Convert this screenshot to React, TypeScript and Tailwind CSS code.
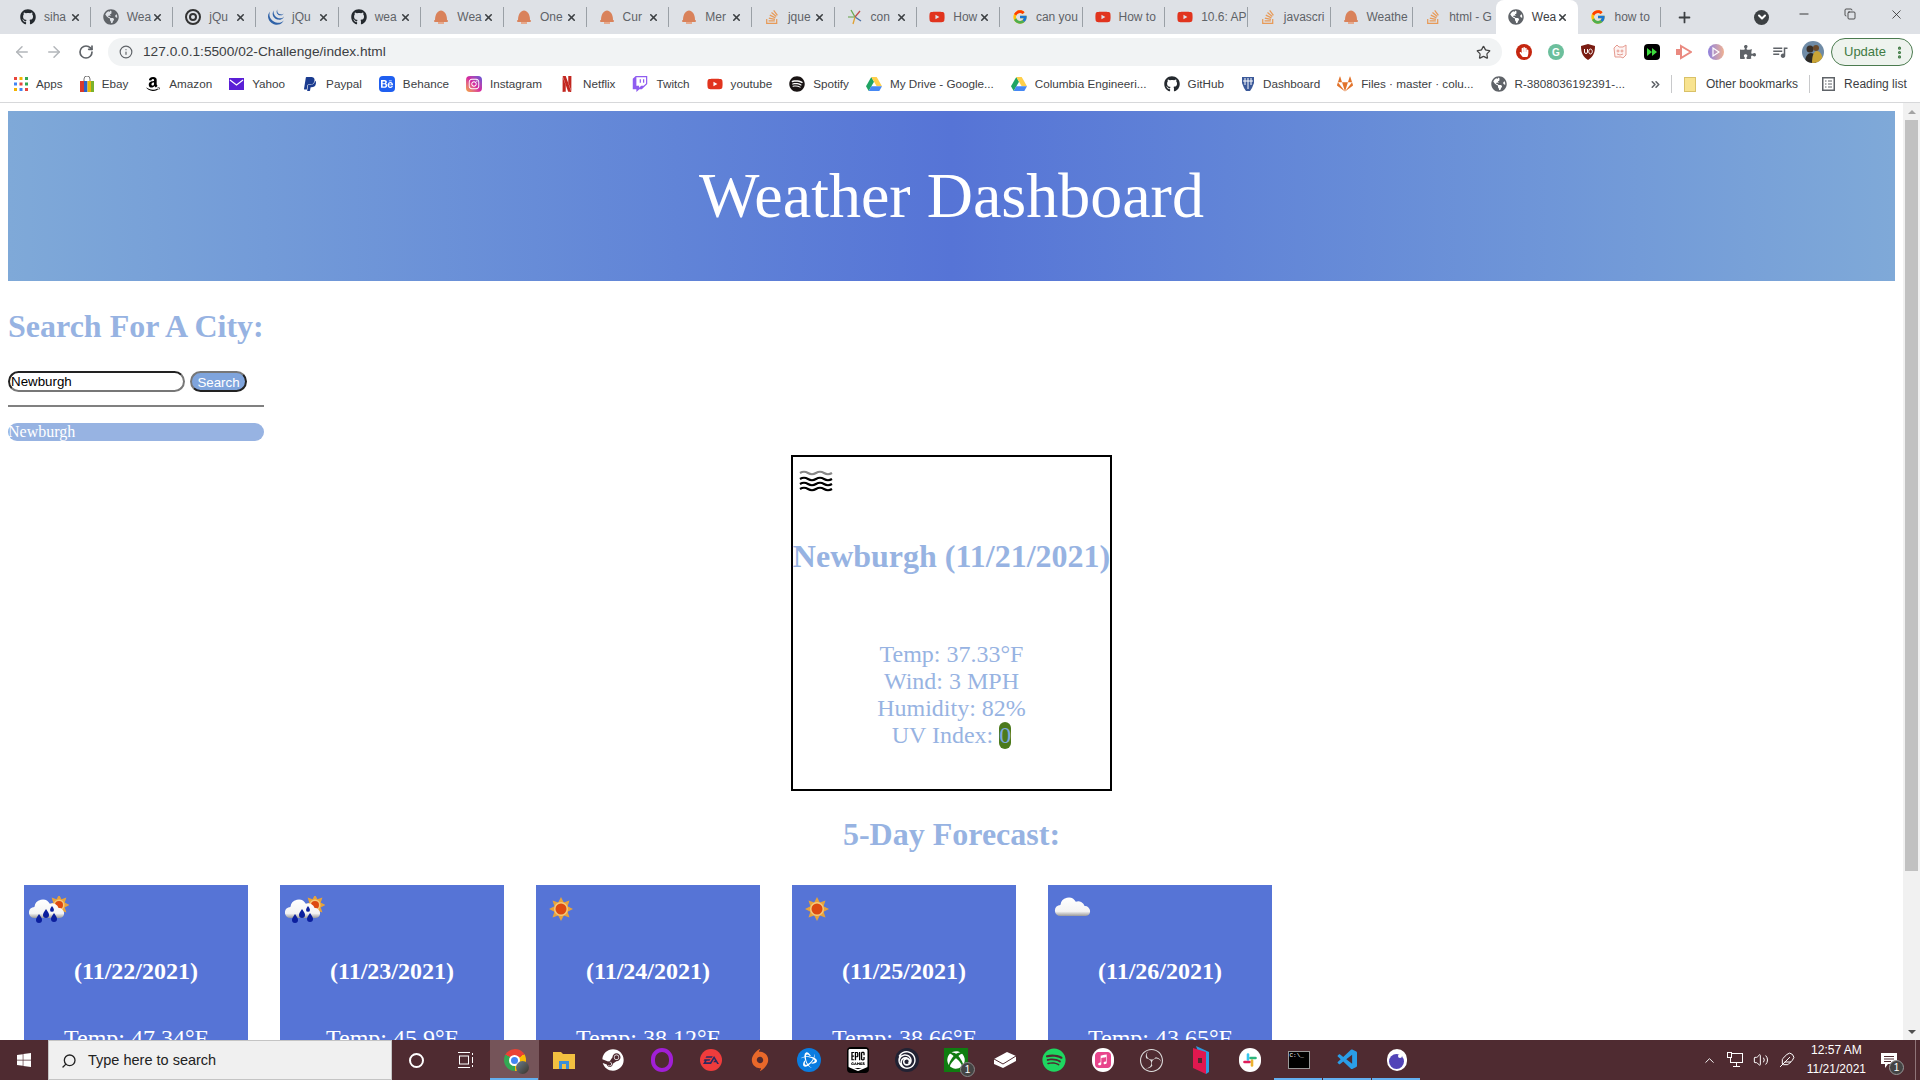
import React from 'react';
import { ArrowLeft, ArrowRight, RotateCw, Info, Star, X, Plus, Minus, Copy, ChevronDown, MoreVertical, ChevronsRight, Search, ChevronUp, Volume2, Feather } from 'lucide-react';
import { FaGithub, FaAmazon, FaPaypal, FaInstagram, FaSpotify, FaYoutube, FaTwitch, FaWindows, FaSteam, FaGitlab, FaStackOverflow, FaXbox, FaGlobeAmericas, FaHandPaper, FaPuzzlePiece } from 'react-icons/fa';
import { FcGoogle } from 'react-icons/fc';
import { MdQueueMusic } from 'react-icons/md';
import { SiJquery, SiBehance, SiNetflix, SiEpicgames, SiUbisoft, SiOrigin, SiObsstudio, SiApplemusic, SiEa, SiBattledotnet } from 'react-icons/si';
import { VscVscode } from 'react-icons/vsc';

const SERIF = 'font-["Liberation_Serif",serif]';

const Mushroom = () => (
  <svg viewBox="0 0 16 16" className="w-4 h-4 shrink-0">
    <path d="M2 11C2 5 5 1.500 8 1.500s6 3.500 6 9.500z" fill="#d9825b" />
    <rect x="1" y="11" width="14" height="2" rx="1" fill="#d9825b" />
    <rect x="5" y="13" width="6" height="2" fill="#e6a98c" />
  </svg>
);

const Youtube = () => <FaYoutube className="w-4 h-4 shrink-0 text-[#e1341e]" />;
const Stack = () => <FaStackOverflow className="w-4 h-4 shrink-0 text-[#e79a58]" />;
const GH = () => <FaGithub className="w-4 h-4 shrink-0 text-[#24292e]" />;
const World = () => <FaGlobeAmericas className="w-4 h-4 shrink-0 text-[#5f6368]" />;

const Conv = () => (
  <svg viewBox="0 0 16 16" className="w-4 h-4 shrink-0" fill="none" strokeWidth="1.3">
    <path d="M8 8 4 1" stroke="#6aa84f" />
    <path d="M8 8l5-6" stroke="#c0504d" />
    <path d="M8 8H1" stroke="#7fb069" />
    <path d="M8 8l6 4" stroke="#4a6fa5" />
    <path d="M8 8l-2 7" stroke="#e0a030" />
  </svg>
);

const Drive = () => (
  <svg viewBox="0 0 16 14" className="w-4 h-[14px]">
    <polygon points="5.3,0 0,9.3 2.7,14 8,4.7" fill="#1fa463" />
    <polygon points="5.3,0 10.7,0 16,9.3 10.7,9.3" fill="#ffd04b" />
    <polygon points="2.7,14 13.300,14 16,9.3 5.3,9.3" fill="#4688f4" />
  </svg>
);

const AppsGrid = () => (
  <svg viewBox="0 0 14 14" className="w-[14px] h-[14px]">
    {['#e8453c', '#f3b300', '#34a853', '#4285f4', '#e8453c', '#34a853', '#f3b300', '#4285f4', '#e8453c'].map((c, i) => (
      <rect key={i} x={(i % 3) * 5.5} y={Math.floor(i / 3) * 5.5} width="3" height="3" fill={c} />
    ))}
  </svg>
);

const EbayBag = () => (
  <svg viewBox="0 0 14 16" className="w-[14px] h-4">
    <path d="M4 5V3a3 3 0 0 1 6 0v2" fill="none" stroke="#777" strokeWidth="1" />
    <rect x="0" y="5" width="4" height="11" fill="#d8382c" />
    <rect x="4" y="5" width="3.5" height="11" fill="#2a62c9" />
    <rect x="7.5" y="5" width="3.5" height="11" fill="#e5b80b" />
    <rect x="11" y="5" width="3" height="11" fill="#7ab32c" />
  </svg>
);

const YahooMail = () => (
  <svg viewBox="0 0 15 12" className="w-[15px] h-3">
    <rect width="15" height="12" fill="#5a1fd6" />
    <path d="M1 2l6.500 5L14 2" fill="none" stroke="#fff" strokeWidth="1.2" />
  </svg>
);

const DashboardMark = () => (
  <svg viewBox="0 0 14 16" className="w-[14px] h-4">
    <path d="M1 1h12v6l-2 5-2 3H5l-2-3-2-5z" fill="#3c5a9a" />
    <path d="M4 2v7M7 2v11M10 2v7M2 5h10" stroke="#fff" strokeWidth="1" />
  </svg>
);

const TABS = [
  { icon: <GH />, label: 'siha', close: true },
  { icon: <World />, label: 'Wea', close: true },
  { icon: <div className="w-4 h-4 shrink-0 rounded-full border-2 border-[#333] flex items-center justify-center"><div className="w-2 h-2 rounded-full border-2 border-[#333]" /></div>, label: 'jQu', close: true },
  { icon: <SiJquery className="w-4 h-4 shrink-0 text-[#2f62a8]" />, label: 'jQu', close: true },
  { icon: <GH />, label: 'wea', close: true },
  { icon: <Mushroom />, label: 'Wea', close: true },
  { icon: <Mushroom />, label: 'One', close: true },
  { icon: <Mushroom />, label: 'Cur', close: true },
  { icon: <Mushroom />, label: 'Mer', close: true },
  { icon: <Stack />, label: 'jque', close: true },
  { icon: <Conv />, label: 'con', close: true },
  { icon: <Youtube />, label: 'How', close: true },
  { icon: <FcGoogle className="w-4 h-4 shrink-0" />, label: 'can you' },
  { icon: <Youtube />, label: 'How to' },
  { icon: <Youtube />, label: '10.6: AP' },
  { icon: <Stack />, label: 'javascri' },
  { icon: <Mushroom />, label: 'Weathe' },
  { icon: <Stack />, label: 'html - G' },
  { icon: <World />, label: 'Wea', active: true, close: true },
  { icon: <FcGoogle className="w-4 h-4 shrink-0" />, label: 'how to' },
];

const BOOKMARKS = [
  { icon: <AppsGrid />, label: 'Apps' },
  { icon: <EbayBag />, label: 'Ebay' },
  { icon: <FaAmazon className="w-4 h-4 text-black" />, label: 'Amazon' },
  { icon: <YahooMail />, label: 'Yahoo' },
  { icon: <FaPaypal className="w-4 h-4 text-[#1a3b8f]" />, label: 'Paypal' },
  { icon: <div className="w-4 h-4 rounded-sm bg-[#1f5ff0] flex items-center justify-center"><SiBehance className="w-3 h-3 text-white" /></div>, label: 'Behance' },
  { icon: <div className="w-4 h-4 rounded-sm bg-gradient-to-tr from-[#f5a623] via-[#d6249f] to-[#5b51d8] flex items-center justify-center"><FaInstagram className="w-3 h-3 text-white" /></div>, label: 'Instagram' },
  { icon: <SiNetflix className="w-4 h-4 text-[#c2261f]" />, label: 'Netflix' },
  { icon: <FaTwitch className="w-4 h-4 text-[#8f5cf0]" />, label: 'Twitch' },
  { icon: <Youtube />, label: 'youtube' },
  { icon: <FaSpotify className="w-4 h-4 text-[#191414]" />, label: 'Spotify' },
  { icon: <Drive />, label: 'My Drive - Google...' },
  { icon: <Drive />, label: 'Columbia Engineeri...' },
  { icon: <GH />, label: 'GitHub' },
  { icon: <DashboardMark />, label: 'Dashboard' },
  { icon: <FaGitlab className="w-4 h-4 text-[#e2732b]" />, label: 'Files · master · colu...' },
  { icon: <World />, label: 'R-3808036192391-...' },
];

const FORECAST = [
  { date: '(11/22/2021)', temp: 'Temp: 47.34°F', icon: 'rain' },
  { date: '(11/23/2021)', temp: 'Temp: 45.9°F', icon: 'rain' },
  { date: '(11/24/2021)', temp: 'Temp: 38.12°F', icon: 'sun' },
  { date: '(11/25/2021)', temp: 'Temp: 38.66°F', icon: 'sun' },
  { date: '(11/26/2021)', temp: 'Temp: 43.65°F', icon: 'cloud' },
];

const Sun = ({ cx, cy, r }: { cx: number; cy: number; r: number }) => (
  <g>
    {[0, 45, 90, 135, 180, 225, 270, 315].map((a) => (
      <polygon key={a} points={`${cx - 3},${cy - r + 1} ${cx + 3},${cy - r + 1} ${cx},${cy - r - 5}`} fill="#e8a33a" transform={`rotate(${a} ${cx} ${cy})`} />
    ))}
    <circle cx={cx} cy={cy} r={r} fill="#f5c97a" />
    <circle cx={cx} cy={cy} r={r - 1.5} fill="#dd4a10" />
  </g>
);

const Cloud = ({ x = 0, y = 0 }: { x?: number; y?: number }) => (
  <g transform={`translate(${x} ${y}) scale(1.1)`}>
    <path d="M4 20a5 5 0 0 1 0-10 7.500 7.500 0 0 1 14-3 6 6 0 0 1 8 4 4.600 4.600 0 0 1 5 4.500 4.500 4.500 0 0 1-4 4.500z" fill="url(#cloudfill)" />
  </g>
);

const Drop = ({ x, y, s = 1 }: { x: number; y: number; s?: number }) => (
  <path transform={`translate(${x} ${y}) scale(${s})`} d="M0 0c-2 3-3 4.500-3 6a3 3 0 0 0 6 0c0-1.500-1-3-3-6z" fill="#0b1f9e" />
);

const WeatherIcon = ({ type }: { type: string }) => (
  <svg viewBox="0 0 40 30" className="w-10 h-[30px]">
    <defs>
      <linearGradient id="cloudfill" x1="0" y1="0" x2="0" y2="1">
        <stop offset="0" stopColor="#ffffff" />
        <stop offset="0.75" stopColor="#f4f4f4" />
        <stop offset="1" stopColor="#9a9a9a" />
      </linearGradient>
    </defs>
    {type === 'rain' && (
      <>
        <Sun cx={30} cy={9} r={5.5} />
        <Cloud x={1} y={0} />
        <Drop x={23} y={10} s={0.65} />
        <Drop x={17} y={13} />
        <Drop x={25} y={17} />
        <Drop x={10} y={18} />
      </>
    )}
    {type === 'sun' && <Sun cx={20} cy={13} r={7} />}
    {type === 'cloud' && <Cloud x={3} y={-2} />}
  </svg>
);

const Wind = () => (
  <svg viewBox="0 0 36 22" className="w-9 h-[22px]" fill="none" stroke="#000" strokeWidth="2.2">
    <path d="M1 3q4-2.500 8 0t8 0 8 0 8 0" stroke="#888" />
    <path d="M1 9q4-2.500 8 0t8 0 8 0 8 0" />
    <path d="M1 14q4-2.500 8 0t8 0 8 0 8 0" />
    <path d="M1 19q4-2.500 8 0t8 0 8 0 8 0" />
  </svg>
);

const TaskIcon = ({ children, open, active }: { children: React.ReactNode; open?: boolean; active?: boolean }) => (
  <div className={`relative w-[49px] h-full flex items-center justify-center ${active ? 'bg-[#755459]' : ''}`}>
    {children}
    {open && <div className="absolute bottom-0 left-0 right-[1px] h-[2px] bg-[#63b0f0]" />}
  </div>
);

const TabStrip = () => (
  <div className="h-[34px] bg-[#dee1e6] flex items-end pl-2 shrink-0">
    {TABS.map((tab, i) => (
      <div
        key={i}
        className={`w-[82.67px] h-[34px] flex items-center pl-[12px] relative ${tab.close ? 'pr-[10px]' : 'pr-[2px]'} ${tab.active ? 'bg-white rounded-t-lg' : ''}`}
      >
        {tab.icon}
        <span className={`ml-[8px] flex-1 whitespace-nowrap text-[12px] font-['Liberation_Sans',sans-serif] ${tab.active ? 'text-[#3c4043]' : 'text-[#5f6368]'}`}>{tab.label}</span>
        {tab.close && <X className="w-[11px] h-[11px] shrink-0 text-[#3c4043]" strokeWidth={3.5} />}
        {!tab.active && i !== 17 && <div className="absolute right-0 top-[7px] h-[20px] w-px bg-[#9aa0a6]" />}
      </div>
    ))}
    <div className="w-[45px] h-[34px] flex items-center justify-center ml-[1px]">
      <Plus className="w-[17px] h-[17px] text-[#3c4043]" strokeWidth={2.5} />
    </div>
    <div className="w-[33px] h-[34px] flex items-center justify-center ml-[38px]">
      <div className="w-[15px] h-[15px] rounded-full bg-[#3c4043] flex items-center justify-center">
        <ChevronDown className="w-3 h-3 text-white" strokeWidth={4} />
      </div>
    </div>
    <div className="flex-1" />
    <div className="h-[34px] flex items-start pt-[7px] pr-[1px]">
      <div className="w-[46px] flex justify-center"><Minus className="w-[14px] h-[14px] text-[#222]" strokeWidth={1.5} /></div>
      <div className="w-[46px] flex justify-center"><Copy className="w-[12px] h-[14px] text-[#222]" strokeWidth={1.5} /></div>
      <div className="w-[46px] flex justify-center"><X className="w-[15px] h-[15px] text-[#222]" strokeWidth={1.2} /></div>
    </div>
  </div>
);

const Toolbar = () => (
  <div className="h-[36px] bg-white flex items-center shrink-0 pl-[13px]">
    <ArrowLeft className="w-[18px] h-[18px] text-[#b3b6ba]" strokeWidth={2} />
    <ArrowRight className="w-[18px] h-[18px] text-[#b3b6ba] ml-[14px]" strokeWidth={2} />
    <RotateCw className="w-4 h-4 text-[#5f6368] ml-[15px]" strokeWidth={2.5} />
    <div className="ml-[14px] w-[1394px] h-[28px] bg-[#f1f3f4] rounded-full flex items-center pl-[11px] pr-[11px]">
      <Info className="w-[14px] h-[14px] text-[#5f6368]" strokeWidth={2} />
      <span className="ml-[10px] text-[13.7px] text-[#3c4043] font-['Liberation_Sans',sans-serif]">127.0.0.1:5500/02-Challenge/index.html</span>
      <div className="flex-1" />
      <Star className="w-[15px] h-[15px] text-[#444]" strokeWidth={2} />
    </div>
    <div className="flex items-center ml-[14px] gap-[16px]">
      <div className="w-4 h-4 rounded-full bg-[#c5260f] flex items-center justify-center"><FaHandPaper className="w-[10px] h-[10px] text-white" /></div>
      <div className="w-4 h-4 rounded-full bg-[#6cbf9c] flex items-center justify-center text-white text-[10px] font-bold font-['Liberation_Sans',sans-serif]">G</div>
      <svg viewBox="0 0 16 16" className="w-4 h-4">
        <path d="M8 0l7 2c0 7-2 11-7 14C3 13 1 9 1 2z" fill="#7a1c12" />
        <path d="M4.500 5v3a1.500 1.500 0 0 0 3 0V5M10.500 5a1.800 2.500 0 1 0 .01 0z" fill="none" stroke="#fff" strokeWidth="1" />
      </svg>
      <svg viewBox="0 0 16 16" className="w-4 h-4" fill="none" stroke="#e59a8f" strokeWidth="1">
        <path d="M2 4l3-3 2 2h4l3-2v10l-3 3-2-1H3z" fill="#fdf3f2" />
        <circle cx="6" cy="7" r="1" />
        <circle cx="10" cy="7" r="1" />
        <path d="M5 10q3 2 6 0" />
      </svg>
      <div className="w-4 h-4 rounded-sm bg-black flex items-center justify-center">
        <svg viewBox="0 0 10 8" className="w-[10px] h-2" fill="#3ddc3d">
          <path d="M0 0l5 4-5 4zM5 0l5 4-5 4z" />
        </svg>
      </div>
      <svg viewBox="0 0 16 16" className="w-4 h-4">
        <rect x="0" y="5" width="5" height="6" fill="#ea8a80" />
        <path d="M5 2l10 6-10 6z" fill="none" stroke="#ea8a80" strokeWidth="2" />
      </svg>
      <div className="w-4 h-4 rounded-full bg-gradient-to-r from-[#8f7fdc] to-[#f0b090] flex items-center justify-center">
        <svg viewBox="0 0 8 10" className="w-2 h-[10px]"><path d="M1 1l6 4-6 4z" fill="none" stroke="#fff" strokeWidth="1.2" /></svg>
      </div>
      <FaPuzzlePiece className="w-4 h-4 text-[#5f6368]" />
      <MdQueueMusic className="w-[18px] h-[18px] -mx-[1px] text-[#5f6368]" />
      <svg viewBox="0 0 22 22" className="-ml-[2px] w-[22px] h-[22px] rounded-full">
        <rect width="22" height="22" fill="#6f8ba6" />
        <circle cx="8" cy="8" r="3.500" fill="#3a3028" />
        <path d="M3 22c0-7 3-10 6-10s5 3 5 10z" fill="#2c2a26" />
        <circle cx="14" cy="7" r="3" fill="#6b4a2a" />
        <path d="M10 22c0-8 2-12 5-12s6 4 6 12z" fill="#c9a436" />
      </svg>
    </div>
    <div className="ml-[7px] w-[82px] h-[28px] rounded-full border border-[#4b7b4f] bg-[#eef3ee] flex items-center pl-[12px]">
      <span className="text-[13px] text-[#3f7a43] font-['Liberation_Sans',sans-serif]">Update</span>
      <MoreVertical className="w-[15px] h-[15px] text-[#3f7a43] ml-[6px]" strokeWidth={3} />
    </div>
  </div>
);

const BookmarksBar = () => (
  <div className="h-[33px] pb-[4px] bg-white border-b border-[#d7d8da] flex items-center shrink-0 pl-[14px] font-['Liberation_Sans',sans-serif] text-[12px] text-[#3c4043]">
    <div className="flex items-center gap-[17px] w-[1627px] text-[11.7px]">
      {BOOKMARKS.map((b) => (
        <div key={b.label} className="flex items-center gap-[8px] whitespace-nowrap">
          {b.icon}
          <span>{b.label}</span>
        </div>
      ))}
    </div>
    <ChevronsRight className="w-[13px] h-[13px] text-[#5f6368] ml-[8px]" strokeWidth={3} />
    <div className="w-px h-[18px] bg-[#c8c9cb] ml-[9px]" />
    <div className="w-[12px] h-[15px] ml-[12px] bg-[#f8e38f] border border-[#d9c168]" />
    <span className="ml-[10px] whitespace-nowrap">Other bookmarks</span>
    <div className="w-px h-[18px] bg-[#c8c9cb] ml-[11px]" />
    <svg viewBox="0 0 13 14" className="w-[13px] h-[14px] ml-[12px]" fill="none" stroke="#5f6368">
      <rect x=".75" y=".75" width="11.500" height="12.500" strokeWidth="1.5" />
      <path d="M3 4h1.500M6 4h4M3 7h1.500M6 7h4M3 10h1.500M6 10h4" strokeWidth="1" />
    </svg>
    <span className="ml-[9px] whitespace-nowrap">Reading list</span>
  </div>
);

const Scrollbar = () => (
  <div className="w-[17px] bg-[#f1f1f1] shrink-0 flex flex-col items-center">
    <div className="h-[17px] flex items-center justify-center">
      <svg viewBox="0 0 8 4" className="w-2 h-1"><path d="M4 0l4 4H0z" fill="#a3a3a3" /></svg>
    </div>
    <div className="w-[13px] h-[751px] bg-[#c1c1c1]" />
    <div className="flex-1" />
    <div className="h-[17px] flex items-center justify-center">
      <svg viewBox="0 0 8 4" className="w-2 h-1"><path d="M0 0h8L4 4z" fill="#505050" /></svg>
    </div>
  </div>
);

const Page = () => (
  <div className={`flex-1 min-w-0 overflow-hidden bg-white ${SERIF}`}>
    <header className="mt-2 mx-2 h-[170px] flex items-center justify-center bg-gradient-to-r from-[#7fa9d8] via-[#5674d6] to-[#7fa9d8]">
      <h1 className="text-[64px] text-white font-normal leading-none">Weather Dashboard</h1>
    </header>

    <aside className="ml-2 w-[256px] mt-[27px]">
      <h2 className="text-[32px] leading-[37px] font-bold text-[#97b3e2]">Search For A City:</h2>
      <div className="mt-[26px] flex items-center gap-[5px]">
        <input
          readOnly
          value="Newburgh"
          className="w-[177px] h-[21px] rounded-full border-2 border-[#222] border-r-[#777] border-b-[#777] bg-white text-[13.333px] text-black pl-[1px] font-['Liberation_Sans',sans-serif] outline-none"
        />
        <button className="w-[57px] h-[21px] rounded-full border-2 border-[#777] border-r-[#222] border-b-[#222] bg-[#7fa4dc] text-white text-[13.333px] font-['Liberation_Sans',sans-serif]">
          Search
        </button>
      </div>
      <hr className="mt-[13px] border-0 border-t-2 border-[#808080]" />
      <div className="mt-[16px] h-[18px] rounded-full bg-[#97b3e2] text-white text-[16px] leading-[18px]">Newburgh</div>
    </aside>

    <section className="mx-auto mt-[14px] w-[321px] h-[336px] border-2 border-black flex flex-col items-center text-[#97b3e2]">
      <div className="self-start ml-[6px] mt-[13px]">
        <Wind />
      </div>
      <h2 className="mt-[46px] text-[32px] leading-[37px] font-bold whitespace-nowrap">Newburgh (11/21/2021)</h2>
      <div className="mt-[66px] text-[24px] leading-[27px] text-center">
        <p>Temp: 37.33°F</p>
        <p>Wind: 3 MPH</p>
        <p>Humidity: 82%</p>
        <p>UV Index: <span className="inline-block rounded-[6px] bg-[#4c7a1c] text-[#7fa9e0]">0</span></p>
      </div>
    </section>

    <h2 className="mt-[25px] text-center text-[32px] leading-[37px] font-bold text-[#97b3e2]">5-Day Forecast:</h2>

    <div className="mt-[32px] ml-6 flex gap-8">
      {FORECAST.map((day) => (
        <div key={day.date} className="w-[224px] h-[300px] bg-[#5674d6] text-white text-center">
          <div className="pl-[5px] pt-[11px] text-left">
            <WeatherIcon type={day.icon} />
          </div>
          <h3 className="mt-[31px] text-[24px] leading-[28px] font-bold">{day.date}</h3>
          <p className="mt-[40px] text-[24px] leading-[27px]">{day.temp}</p>
        </div>
      ))}
    </div>
  </div>
);

const Chrome = () => (
  <div className="relative w-[22px] h-[22px]">
    <div className="w-full h-full rounded-full bg-[conic-gradient(from_-60deg,#ea4335_0_33%,#fbbc05_33%_66%,#34a853_66%)] flex items-center justify-center">
      <div className="w-[11px] h-[11px] rounded-full bg-[#4285f4] border-2 border-white" />
    </div>
    <div className="absolute -right-[3px] -bottom-[3px] w-[13px] h-[13px] rounded-full bg-gradient-to-br from-[#6a7f92] to-[#3a3428]" />
  </div>
);

const Taskbar = () => (
  <div className="h-10 bg-[#4f2b31] flex items-stretch shrink-0 text-white font-['Liberation_Sans',sans-serif]">
    <div className="w-[48px] flex items-center justify-center">
      <FaWindows className="w-4 h-4" />
    </div>
    <div className="w-[344px] bg-[#f0f0f0] border border-[#c4c4c4] flex items-center pl-[12px] pt-[1px] text-[#222] text-[14.5px]">
      <Search className="w-4 h-4 -scale-x-100 text-[#222]" />
      <span className="ml-[11px]">Type here to search</span>
    </div>
    <TaskIcon><div className="w-[15px] h-[15px] rounded-full border-2 border-white" /></TaskIcon>
    <TaskIcon>
      <svg viewBox="0 0 16 16" className="w-4 h-4" fill="none" stroke="#fff" strokeWidth="1">
        <path d="M0 .500h12M0 15.500h12" />
        <rect x="1.500" y="4" width="9" height="8" />
        <path d="M14.500 1v2M14.500 5v6M14.500 13v2" />
      </svg>
    </TaskIcon>
    <TaskIcon open active><Chrome /></TaskIcon>
    <TaskIcon>
      <svg viewBox="0 0 22 18" className="w-[22px] h-[18px]">
        <path d="M0 1h8l2 2h12v15H0z" fill="#f2c040" />
        <rect x="6" y="10" width="10" height="8" fill="#3b8fd8" />
        <rect x="9" y="13" width="4" height="5" fill="#f2c040" />
      </svg>
    </TaskIcon>
    <TaskIcon><FaSteam className="w-[22px] h-[22px] text-white" /></TaskIcon>
    <TaskIcon><div className="w-[22px] h-[24px] rounded-full border-[4px] border-[#a11fd6]" /></TaskIcon>
    <TaskIcon><div className="w-[22px] h-[22px] rounded-full bg-[#f03c3c] flex items-center justify-center"><SiEa className="w-4 h-4 text-[#2a2a60]" /></div></TaskIcon>
    <TaskIcon><SiOrigin className="w-[22px] h-[22px] text-[#e8682a]" /></TaskIcon>
    <TaskIcon><div className="w-[24px] h-[24px] rounded-full bg-[#0a7ce0] flex items-center justify-center"><SiBattledotnet className="w-4 h-4 text-white" /></div></TaskIcon>
    <TaskIcon><SiEpicgames className="w-[22px] h-[26px] text-white bg-black rounded-sm" /></TaskIcon>
    <TaskIcon><div className="w-[24px] h-[24px] rounded-full bg-[#223] flex items-center justify-center"><SiUbisoft className="w-[18px] h-[18px] text-white" /></div></TaskIcon>
    <TaskIcon>
      <div className="w-[24px] h-[24px] bg-[#107c10] flex items-center justify-center"><FaXbox className="w-[18px] h-[18px] text-white" /></div>
      <div className="absolute right-[5px] bottom-[3px] w-[15px] h-[15px] rounded-full bg-[#444] border border-[#888] text-[10px] leading-[13px] text-center">1</div>
    </TaskIcon>
    <TaskIcon>
      <svg viewBox="0 0 22 16" className="w-[22px] h-4">
        <path d="M0 7l13-7 9 4v5L9 16 0 12z" fill="#fff" />
        <path d="M0 7l9 5 13-8" fill="none" stroke="#4f2b31" strokeWidth="1" />
      </svg>
    </TaskIcon>
    <TaskIcon><FaSpotify className="w-[24px] h-[24px] text-[#1ed760]" /></TaskIcon>
    <TaskIcon><div className="w-[22px] h-[24px] rounded-full bg-white flex items-center justify-center"><SiApplemusic className="w-[16px] h-[16px] text-[#e8458c]" /></div></TaskIcon>
    <TaskIcon><SiObsstudio className="w-[23px] h-[23px] text-[#ddd]" /></TaskIcon>
    <TaskIcon>
      <svg viewBox="0 0 16 28" className="w-4 h-7">
        <path d="M3 0l13 6v20l-3 2z" fill="#2d9be0" />
        <path d="M0 2l13 4v22L0 22z" fill="#e0184f" />
        <rect x="5" y="12" width="4" height="5" fill="#4f2b31" />
      </svg>
    </TaskIcon>
    <TaskIcon>
      <div className="w-[22px] h-[24px] rounded-full bg-white flex items-center justify-center">
        <svg viewBox="0 0 14 14" className="w-[14px] h-[14px]" strokeWidth="2.6" strokeLinecap="round">
          <path d="M5 1.500v5" stroke="#36c5f0" />
          <path d="M1.500 9h5" stroke="#e01e5a" />
          <path d="M9 7.500v5" stroke="#ecb22e" />
          <path d="M7.500 5h5" stroke="#2eb67d" />
        </svg>
      </div>
    </TaskIcon>
    <TaskIcon open>
      <div className="w-[22px] h-[18px] bg-black border border-[#999] text-[6px] leading-[7px] pl-[1px] text-white font-['Liberation_Mono',monospace]">C:\_</div>
    </TaskIcon>
    <TaskIcon open><VscVscode className="w-[24px] h-[24px] text-[#2a9ee8]" /></TaskIcon>
    <TaskIcon open>
      <div className="relative w-[20px] h-[22px] rounded-full bg-white flex items-center justify-center">
        <div className="w-[15px] h-[15px] mt-[2px] rounded-full bg-[#5244b8]" />
        <div className="absolute right-[5px] top-[5px] w-[4px] h-[4px] rounded-full bg-white" />
      </div>
    </TaskIcon>
    <div className="flex-1" />
    <div className="flex items-center gap-[10px] pr-[18px]">
      <ChevronUp className="w-[15px] h-[15px]" strokeWidth={1.5} />
      <svg viewBox="0 0 16 16" className="w-4 h-4" fill="none" stroke="#fff" strokeWidth="1">
        <rect x="3.500" y="1.500" width="12" height="9" />
        <rect x=".5" y=".5" width="4" height="5" fill="#4f2b31" />
        <path d="M9.500 10.500v4M6 14.500h7" />
      </svg>
      <Volume2 className="w-4 h-4" strokeWidth={1.5} />
      <Feather className="w-4 h-4" strokeWidth={1.5} />
      <div className="text-[12px] leading-[19px] text-center ml-[2px]">
        <div>12:57 AM</div>
        <div>11/21/2021</div>
      </div>
      <div className="relative ml-[5px]">
        <svg viewBox="0 0 16 15" className="w-4 h-[15px]">
          <path d="M0 0h16v11H7l-3 4v-4H0z" fill="#fff" />
          <path d="M3 3.500h10M3 6h10M3 8.500h7" stroke="#4f2b31" strokeWidth="1" />
        </svg>
        <div className="absolute -right-[7px] -bottom-[7px] w-[15px] h-[15px] rounded-full bg-[#444] border border-[#999] text-[10px] leading-[13px] text-center">1</div>
      </div>
    </div>
    <div className="w-px bg-[#8f7478]" />
    <div className="w-[4px]" />
  </div>
);

export default function App() {
  return (
    <div className="w-[1920px] h-[1080px] flex flex-col overflow-hidden bg-white">
      <TabStrip />
      <Toolbar />
      <BookmarksBar />
      <div className="flex-1 min-h-0 flex">
        <Page />
        <Scrollbar />
      </div>
      <Taskbar />
    </div>
  );
}
